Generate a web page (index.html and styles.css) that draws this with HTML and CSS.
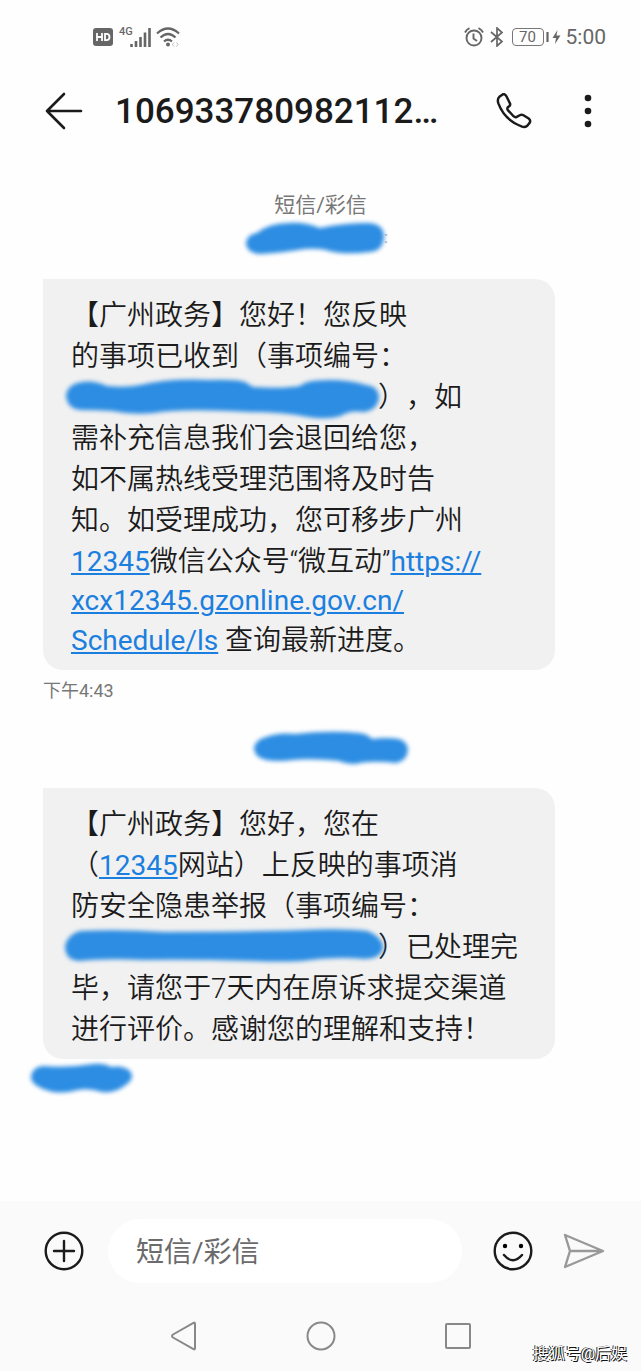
FILE: index.html
```html
<!DOCTYPE html>
<html lang="zh-CN">
<head>
<meta charset="utf-8">
<meta name="viewport" content="width=device-width, initial-scale=1">
<title>短信/彩信</title>
<link rel="stylesheet" href="styles.css">
</head>
<body>
<div class="screen">
  <div class="status">
    <div class="status-group">
      <svg class="icon" width="20" height="18" viewBox="0 0 20 18"><rect x="0" y="0" width="20" height="18" rx="3" fill="#666"/><path d="M4 5v8M9 5v8M4 9h5M12 5.800v6.400h1.500q3 0 3-3.200t-3-3.200z" fill="none" stroke="#fff" stroke-width="1.800"/></svg>
      <span class="network">4G</span>
      <svg class="icon signal" width="21" height="20" viewBox="0 0 21 20"><path d="M1.500 17v3M6 14v6M10.500 10v10M15 5.500v14.500M19.500 1v19" stroke="#666" stroke-width="2.600"/></svg>
      <svg class="icon wifi" width="24" height="20" viewBox="0 0 24 20"><g fill="none" stroke="#666" stroke-width="2.200"><path d="M1 6.500Q12-3.500 23 6.500M4.500 10.500Q12 3.500 19.500 10.500M8 14.500Q12 11 16 14.500"/></g><circle cx="12" cy="17.500" r="2" fill="#666"/><path d="M18 15.500l-1.500 2 1.500 2M20.500 15.500l1.500 2-1.500 2" fill="none" stroke="#bbb"/></svg>
    </div>
    <div class="status-group">
      <svg class="icon" width="20" height="20" viewBox="0 0 20 20"><g fill="none" stroke="#666" stroke-width="1.900"><circle cx="10" cy="11" r="7.500"/><path d="M9.500 6.500v5l3.500 2.500M1 5.500Q2.500 2.500 5.500 1.200M19 5.500Q17.500 2.500 14.500 1.200"/></g></svg>
      <svg class="icon bluetooth" width="14" height="20" viewBox="0 0 14 20"><path d="M1 5l11 9.500-5 4.500V1l5 4.500L1 15" fill="none" stroke="#666" stroke-width="1.700"/></svg>
      <span class="battery">70</span>
      <svg class="icon" width="15" height="18" viewBox="0 0 15 18"><path d="M1.500 4v10" stroke="#666" stroke-width="2.200"/><path d="M11.500 2L6.500 10h3.500l-1 6 5.500-8.500h-4z" fill="#666"/></svg>
      <span class="clock">5:00</span>
    </div>
  </div>

  <header class="header">
    <button class="icon-button" aria-label="返回"><svg width="38" height="38" viewBox="0 0 38 38"><path d="M36 19H2M19 2L2 19l17 17" fill="none" stroke="#1b1b1b" stroke-width="2.600" stroke-linecap="round" stroke-linejoin="round"/></svg></button>
    <h1 class="title">106933780982112…</h1>
    <button class="icon-button" aria-label="拨打电话"><svg width="36" height="36" viewBox="0 0 38 38"><path d="M7 1.500L3.500 4Q1 6.500 2.500 11C7 23 15 31 27.500 35.500Q30.500 36.500 33 34.500L35.500 31.500Q37 29 34.500 27L29 23.500Q27 22.500 25 23.500L21.500 25.500Q20 26 18.500 24.500L12.500 18Q11.500 16.500 12.500 15L14.500 13.500Q15.500 12 14.500 10.500L11 3.500Q9.500 .5 7 1.500Z" fill="none" stroke="#1b1b1b" stroke-width="2.600" stroke-linejoin="round"/></svg></button>
    <button class="icon-button more" aria-label="更多"><svg width="8" height="34" viewBox="0 0 8 34"><g fill="#1b1b1b"><circle cx="4" cy="4" r="3.300"/><circle cx="4" cy="17" r="3.300"/><circle cx="4" cy="30" r="3.300"/></g></svg></button>
  </header>

  <main class="thread">
    <p class="channel">短信/彩信</p>
    <svg class="mark mark-center" width="144" height="36" viewBox="0 0 144 36"><text x="139" y="23" class="remnant">:</text><path class="paint" d="M12 13Q24 3 44 3Q60 2 75 8Q98 3 124 3Q139 4 139 17Q138 31 125 32Q100 35 84 31Q76 28 60 29Q36 33 15 34Q1 33 1 22Q3 14 12 13Z"/></svg>

    <article class="bubble">
      <span class="line">【广州政务】您好！您反映</span>
      <span class="line">的事项已收到（事项编号：</span>
      <span class="line"><span class="hidden-number"><svg class="stroke" width="318" height="46" viewBox="0 0 318 46"><path class="paint" d="M18 6Q30 4 43 10Q62 12 76 9Q108 2 145 4Q172 3 181 6L189 11Q217 13 236 10Q242 4 265 4Q286 4 302 9Q314 10 315 21Q314 34 300 36Q285 34 277 40Q263 44 244 41Q220 36 185 36Q118 32 90 37Q67 39 48 35Q32 34 17 34Q3 33 2 19Q4 8 18 6Z"/></svg></span>），如</span>
      <span class="line">需补充信息我们会退回给您，</span>
      <span class="line">如不属热线受理范围将及时告</span>
      <span class="line">知。如受理成功，您可移步广州</span>
      <span class="line"><a class="link" href="tel:12345">12345</a>微信公众号“微互动”<a class="link" href="https://xcx12345.gzonline.gov.cn/Schedule/ls">https://</a></span>
      <span class="line line-latin"><a class="link" href="https://xcx12345.gzonline.gov.cn/Schedule/ls">xcx12345.gzonline.gov.cn/</a></span>
      <span class="line"><a class="link" href="https://xcx12345.gzonline.gov.cn/Schedule/ls">Schedule/ls</a> 查询最新进度。</span>
    </article>
    <time class="time">下午4:43</time>

    <svg class="mark mark-date" width="160" height="36" viewBox="0 0 160 36"><path class="paint" d="M15 7Q28 2 44 4Q78 0 108 3Q117 4 121 9Q135 7 148 9Q157 12 157 20Q156 31 145 33Q120 30 104 34Q95 34 88 31Q60 28 42 30Q27 32 15 30Q3 27 3 18Q4 10 15 7Z"/></svg>

    <article class="bubble">
      <span class="line">【广州政务】您好，您在</span>
      <span class="line">（<a class="link" href="tel:12345">12345</a>网站）上反映的事项消</span>
      <span class="line">防安全隐患举报（事项编号：</span>
      <span class="line"><span class="hidden-number"><svg class="stroke" width="322" height="40" viewBox="0 0 322 40"><path class="paint" d="M16 5Q55 3 100 6Q180 6 240 4Q278 2 303 5Q319 11 319 22Q317 33 300 33Q270 30 238 35Q215 36 190 35Q120 33 80 34Q40 32 15 35Q1 34 1 20Q4 8 16 5Z"/></svg></span>）已处理完</span>
      <span class="line">毕，请您于7天内在原诉求提交渠道</span>
      <span class="line">进行评价。感谢您的理解和支持！</span>
    </article>
    <svg class="mark mark-time" width="108" height="34" viewBox="0 0 108 34"><path class="paint" d="M15 5Q40 7 65 3Q76 2 83 6Q95 4 102 10Q107 17 99 23Q87 33 74 31Q61 27 50 29Q30 34 18 29Q3 24 3 16Q4 6 15 5Z"/></svg>
  </main>

  <footer class="footer">
    <form class="composer">
      <button type="button" class="icon-button" aria-label="添加"><svg width="40" height="40" viewBox="0 0 40 40"><g fill="none" stroke="#1b1b1b" stroke-width="2.400"><circle cx="20" cy="20" r="18.300"/><path d="M20 10v20M10 20h20" stroke-linecap="round"/></g></svg></button>
      <input class="field" type="text" aria-label="短信/彩信" placeholder="短信/彩信">
      <button type="button" class="icon-button" aria-label="表情"><svg width="40" height="40" viewBox="0 0 40 40"><g fill="none" stroke="#1b1b1b" stroke-width="2.400"><circle cx="20" cy="20" r="18.300"/><path d="M11 24Q20 34.500 29 24" stroke-linecap="round"/></g><circle cx="12" cy="15" r="2.200"/><circle cx="28" cy="15" r="2.200"/></svg></button>
      <button type="button" class="icon-button" aria-label="发送"><svg width="42" height="36" viewBox="0 0 42 36"><path d="M2 2L40 18 2 34 7 18ZM7 18H40" fill="none" stroke="#999" stroke-width="2.400" stroke-linejoin="round"/></svg></button>
    </form>
    <nav class="navbar">
      <button class="icon-button" aria-label="后退"><svg width="28" height="30" viewBox="0 0 28 30"><path d="M23.500 1.800Q25 1 25 3V27Q25 29 23.500 28.200L3 16.500Q1 15 3 13.500Z" fill="none" stroke="#888" stroke-width="2" stroke-linejoin="round"/></svg></button>
      <button class="icon-button" aria-label="主屏幕"><svg width="30" height="30" viewBox="0 0 30 30"><circle cx="15" cy="15" r="13.500" fill="none" stroke="#888" stroke-width="2"/></svg></button>
      <button class="icon-button" aria-label="最近任务"><svg width="28" height="28" viewBox="0 0 28 28"><rect x="2" y="2" width="24" height="24" rx="1" fill="none" stroke="#888" stroke-width="2"/></svg></button>
    </nav>
    <span class="watermark">搜狐号@后娱</span>
  </footer>
</div>
</body>
</html>
```
FILE: styles.css
```css
* {
  box-sizing: border-box;
}

body {
  margin: 0;
  background: #fefefe;
  color: #1b1b1b;
  font-family: Roboto, "Noto Sans CJK SC", sans-serif;
  text-spacing-trim: space-all;
}

.screen {
  display: flex;
  flex-direction: column;
  min-height: 100vh;
}

.icon,
.mark {
  display: block;
}

.status {
  display: flex;
  justify-content: space-between;
  height: 74px;
  padding: 0 35px 0 93px;
  color: #666;
}

.status-group {
  display: flex;
  align-items: center;
}

.network {
  align-self: flex-start;
  margin: 24px 0 0 6px;
  font-size: 11px;
  font-weight: 500;
  line-height: 16px;
}

.signal {
  margin-left: -3px;
}

.wifi {
  margin-left: 5px;
}

.bluetooth {
  margin: 0 8px 0 6px;
}

.battery {
  width: 32px;
  margin-right: 2px;
  border: 1px solid #777;
  border-radius: 4px;
  font-size: 15px;
  line-height: 16px;
  text-align: center;
}

.clock {
  margin-left: 5px;
  font-size: 21px;
}

.icon-button {
  display: flex;
  flex: none;
  margin: 0;
  padding: 0;
  border: 0;
  background: none;
}

.header {
  display: flex;
  align-items: center;
  height: 74px;
  padding: 0 49px 0 45px;
}

.title {
  flex: 1;
  margin: 0 0 0 32px;
  padding-top: 2px;
  font-size: 35px;
  font-weight: 500;
  line-height: 44px;
}

.more {
  margin-left: 52px;
}

.thread {
  flex: 1;
  padding: 42px 86px 0 43px;
}

.channel {
  margin: 0 -43px 0 0;
  color: #777;
  font-size: 21px;
  line-height: 30px;
  text-align: center;
}

.paint {
  fill: #2d8de2;
  filter: blur(2px);
}

.remnant {
  fill: #aaa;
  font-size: 16px;
}

.mark {
  overflow: visible;
}

.mark-center {
  margin: 0 auto 23px;
  position: relative;
  left: 18px;
}

.bubble {
  padding: 16px 28px 9px;
  border-radius: 0 20px 20px 20px;
  background: #f1f1f1;
  font-size: 28px;
  font-weight: 350;
}

.line {
  display: block;
  line-height: 41px;
  white-space: nowrap;
}

.line-latin {
  line-height: 38px;
}

.link {
  color: #1b7fdf;
  font-weight: 400;
  text-decoration-thickness: 2px;
  text-underline-offset: 2px;
}

.hidden-number {
  display: inline-block;
  position: relative;
  width: 307px;
  height: 28px;
  vertical-align: middle;
}

.stroke {
  position: absolute;
  top: -10px;
  left: -7px;
  overflow: visible;
}

.time {
  display: block;
  color: #777;
  font-size: 18px;
  line-height: 42px;
}

.mark-date {
  margin: 18px auto 22px;
  position: relative;
  left: 32px;
}

.mark-time {
  margin: 2px 0 0 -15px;
}

.footer {
  position: relative;
  background: #fafafa;
}

.composer {
  display: flex;
  align-items: center;
  padding: 18px 36px 18px 44px;
}

.field {
  flex: 1;
  min-width: 0;
  height: 64px;
  margin: 0 31px 0 24px;
  padding: 3px 28px 0;
  border: 0;
  border-radius: 32px;
  background: #fff;
  color: #1b1b1b;
  font-family: inherit;
  font-size: 28px;
}

.field::placeholder {
  color: #6b6b6b;
  opacity: 1;
}

.composer .icon-button:last-child {
  margin-left: 30px;
}

.navbar {
  display: flex;
  align-items: center;
  justify-content: center;
  gap: 108px;
  height: 70px;
}

.watermark {
  position: absolute;
  right: 14px;
  bottom: 5px;
  color: #fff;
  font-size: 16px;
  line-height: 24px;
  text-shadow: 1px 1px 0 #111, -1px 0 0 #111;
}
```
